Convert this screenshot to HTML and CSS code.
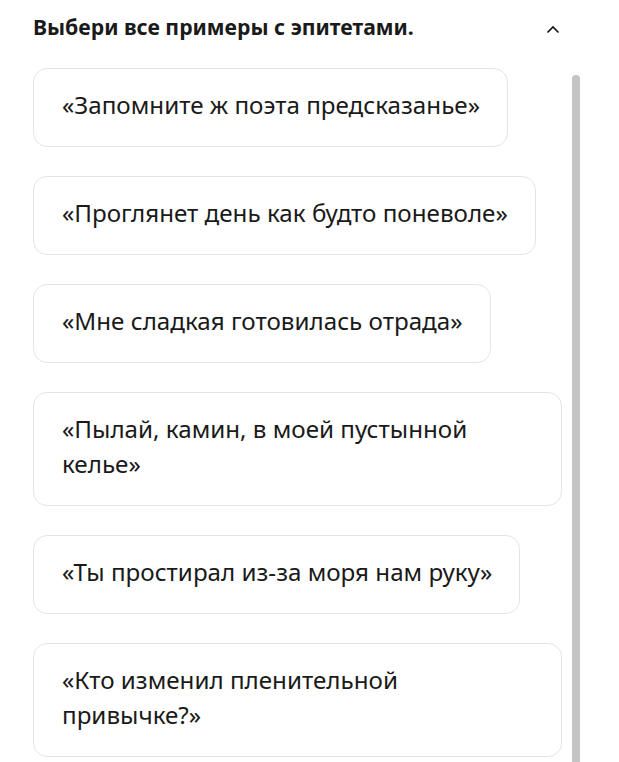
FILE: index.html
```html
<!DOCTYPE html>
<html lang="ru">
<head>
  <meta charset="UTF-8">
  <title>Эпитеты</title>
  <link rel="stylesheet" href="styles.css">
</head>
<body>

  <div class="task">
    <div class="task-head">
      <h2>Выбери все примеры с эпитетами.</h2>
      <svg class="chevron" width="14" height="9" viewBox="0 0 14 9">
        <path d="M1.5 7.5 L7 2 L12.5 7.5" fill="none" stroke="#111" stroke-width="1.6"/>
      </svg>
    </div>

    <div class="task-body">
      <div class="options">
        <div class="option">«Запомните ж поэта предсказанье»</div>
        <div class="option">«Проглянет день как будто поневоле»</div>
        <div class="option">«Мне сладкая готовилась отрада»</div>
        <div class="option">«Пылай, камин, в моей пустынной келье»</div>
        <div class="option">«Ты простирал из-за моря нам руку»</div>
        <div class="option">«Кто изменил пленительной привычке?»</div>
      </div>
      <div class="scrollbar"></div>
    </div>
  </div>

</body>
</html>
```

FILE: styles.css
```css
body {
  margin: 0;
  background: #fff;
  font-family: "Noto Sans", "Open Sans", sans-serif;
  color: #1a1a1a;
  overflow: hidden;
}

.task {
  padding: 0 0 0 33px;
}

.task-head {
  display: flex;
  align-items: center;
  justify-content: space-between;
  width: 529px;
  height: 52px;
}

.task-head h2 {
  margin: 0;
  font-size: 21.2px;
  font-weight: 700;
}

.chevron {
  margin-right: 2px;
  margin-top: 6px;
}

.task-body {
  display: flex;
  gap: 10px;
  margin-top: 16px;
}

.options {
  width: 529px;
  display: flex;
  flex-direction: column;
  align-items: flex-start;
  gap: 29px;
}

.option {
  box-sizing: border-box;
  max-width: 529px;
  padding: 18px 27px 24px 28px;
  border: 1px solid #e4e4e4;
  border-radius: 14px;
  font-size: 24.2px;
  line-height: 35px;
  cursor: pointer;
}

.scrollbar {
  width: 8px;
  height: 720px;
  margin-top: 7px;
  background: #c4c4c4;
  border-radius: 4px 4px 0 0;
}
```
